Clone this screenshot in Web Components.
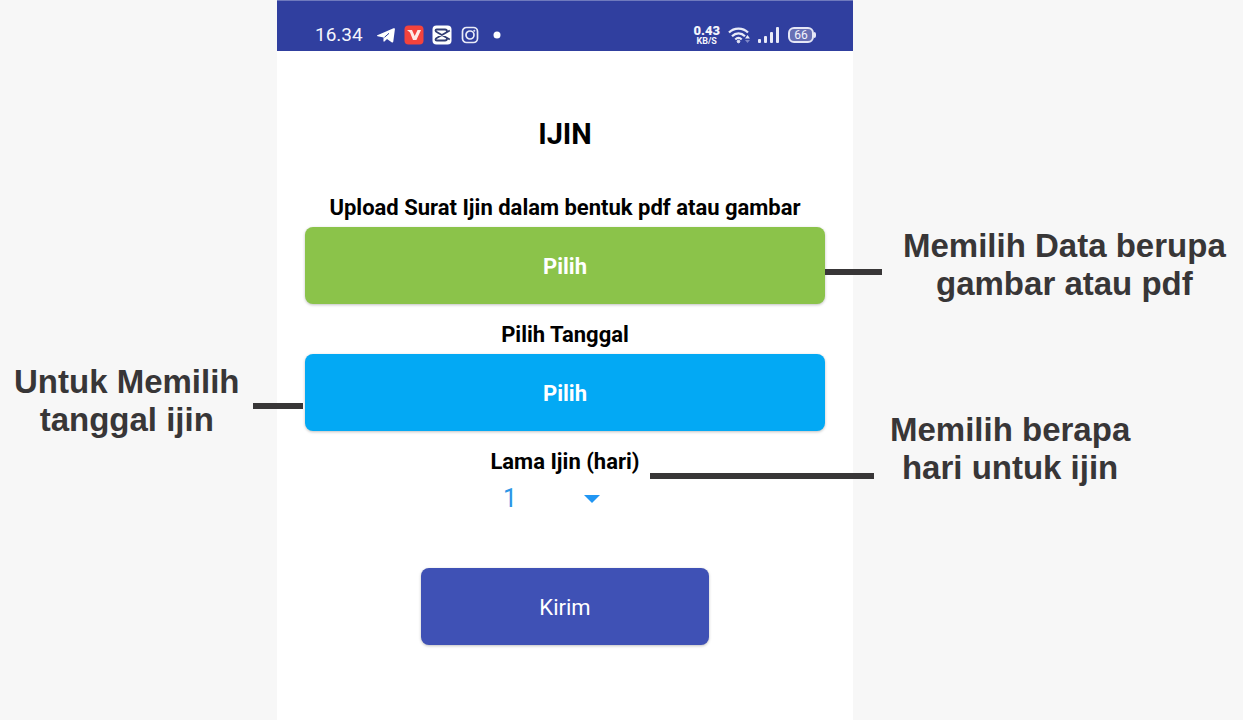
<!DOCTYPE html>
<html lang="id">
<head>
<meta charset="utf-8">
<meta name="viewport" content="width=device-width, initial-scale=1">
<title>IJIN</title>
<style>
  body { margin: 0; background: #f7f7f7; font-family: Roboto, sans-serif; }
</style>
</head>
<body>
<guide-page></guide-page>

<template id="guide-page">
  <style>
    :host { display: grid; grid-template-columns: 277fr 576fr 390fr; min-height: 100vh; }
    aside { display: flex; flex-direction: column; align-items: flex-start; gap: 108px; }
    .left { padding: 363px 0 0 14px; }
    .right { padding-top: 227px; }
    .date { --line: 50px; --gap: 13px; --pull: -26px; --drop: 10px; }
    .file { --line: 57px; --gap: 21px; --pull: -28px; --drop: 14px; }
    .days { --line: 224px; --gap: 16px; --pull: -203px; --drop: 54px; }
  </style>
  <aside class="left">
    <call-out class="date" side="left">Untuk Memilih<br>tanggal ijin</call-out>
  </aside>
  <phone-screen>
    <upload-field caption="Upload Surat Ijin dalam bentuk pdf atau gambar" tone="green">Pilih</upload-field>
    <upload-field caption="Pilih Tanggal" tone="blue">Pilih</upload-field>
    <day-picker></day-picker>
    <send-button>Kirim</send-button>
  </phone-screen>
  <aside class="right">
    <call-out class="file">Memilih Data berupa<br>gambar atau pdf</call-out>
    <call-out class="days">Memilih berapa<br>hari untuk ijin</call-out>
  </aside>
</template>

<template id="call-out">
  <style>
    :host { display: flex; align-items: center; gap: var(--gap); position: relative; z-index: 1; margin-left: var(--pull); }
    :host([side="left"]) { flex-direction: row-reverse; margin: 0 var(--pull) 0 0; }
    i { flex: none; width: var(--line); height: 6px; margin-top: var(--drop); background: #383637; }
    p { margin: 0; font: bold 33px/38px "Liberation Sans", Arial, sans-serif; color: #383637; text-align: center; white-space: nowrap; }
  </style>
  <i></i><p><slot></slot></p>
</template>

<template id="phone-screen">
  <style>
    :host { display: flex; flex-direction: column; background: #fff; }
    main { display: flex; flex-direction: column; gap: 16px; padding: 67px 28px 74px; }
    h1 { margin: 0 0 27px; font-size: 29px; line-height: 32px; font-weight: 700; text-align: center; color: #000; }
  </style>
  <status-bar></status-bar>
  <main><h1>IJIN</h1><slot></slot></main>
</template>

<template id="status-bar">
  <style>
    :host { display: flex; justify-content: space-between; align-items: center; height: 51px; box-sizing: border-box; padding: 18px 37px 0 38px; border-top: 1px solid #6f7abd; background: #303f9f; color: #f4f5fc; }
    div { display: flex; align-items: center; }
    svg { display: block; }
    time { font-size: 19px; line-height: 24px; margin-right: 13px; }
    .apps { gap: 8px; }
    .rate { display: flex; flex-direction: column; align-items: center; font-weight: 700; }
    .rate b { font-size: 13px; line-height: 11px; }
    .rate small { font-size: 9px; line-height: 10px; }
    .system { gap: 8px; }
    .battery { box-sizing: border-box; width: 26px; height: 16px; border: 2px solid #e4e6f6; border-radius: 6px; background: #6870b4; font-size: 12px; line-height: 12px; justify-content: center; }
    .cell i { width: 2px; height: 6px; background: #e4e6f6; border-radius: 0 2px 2px 0; }
  </style>
  <div>
    <time>16.34</time>
    <div class="apps">
      <svg width="20" height="20" viewBox="0 0 20 20"><path fill="#fff" d="M1.300 10.300 17.500 3.300c1-.4 1.500 0 1.400 1L17.300 16.500c-.2 1-.8 1.300-1.700.7L11 14l-2.300 2.300c-.6.6-1.300.4-1.300-.5l.2-3.300-6-1.300c-.7-.2-.8-.6-.3-.9z"/><path d="m8.500 12.300 4.500-4" stroke="#303f9f" stroke-width="1"/></svg>
      <svg width="20" height="20" viewBox="0 0 20 20"><rect x=".5" y=".5" width="19" height="19" rx="4" fill="#f4433c"/><path d="M3 5h5l2.700 6L13.500 5H17l-4.600 10H9L6 7.500z" fill="#ffe9e4"/></svg>
      <svg width="20" height="20" viewBox="0 0 20 20"><rect x=".5" y=".5" width="19" height="19" rx="4" fill="#fff"/><path d="M17.800 5.500 5.500 12.500c-1.500.8-2 1.200-2 2s.5 1 1.300 1H13c1.500 0 2-.5 2-2M17.800 14.500 5.500 7.500c-1.500-.8-2-1.200-2-2s.5-1 1.300-1H13c1.500 0 2 .5 2 2" fill="none" stroke="#303c72" stroke-width="1.800"/></svg>
      <svg width="20" height="20" viewBox="0 0 20 20" fill="none" stroke="#e9ebf8" stroke-width="1.700"><rect x="2.500" y="2.500" width="15" height="15" rx="4"/><circle cx="10" cy="10" r="4"/><circle cx="14.300" cy="5.800" r=".7" fill="#e9ebf8" stroke-width=".6"/></svg>
      <svg width="20" height="20" viewBox="0 0 20 20"><circle cx="9" cy="10" r="3.500" fill="#fff"/></svg>
    </div>
  </div>
  <div class="system">
    <div class="rate"><b>0.43</b><small>KB/S</small></div>
    <svg width="22" height="20" viewBox="0 0 22 20" fill="none" stroke="#e9ebf8" stroke-width="2.200"><path d="M1 7.500c5-5.300 14-5.300 19 0M4 11.200c3.700-3.800 9.300-3.800 13 0M7.300 14.500c2-2 4.300-2 6.400 0"/><circle cx="10.500" cy="16.500" r="1.300" fill="#e9ebf8" stroke-width="1"/><path d="m17 13.500 2.500-3.500 2.500 3.500z" fill="#e9ebf8" stroke="none"/><path d="m17 15 2.500 3 2.500-3z" fill="#7f88c8" stroke="none"/></svg>
    <svg width="22" height="20" viewBox="0 0 22 20" fill="#e9ebf8"><rect x="0" y="14" width="3" height="4" rx="1"/><rect x="6" y="11" width="3" height="7" rx="1"/><rect x="12" y="7" width="3" height="11" rx="1"/><rect x="18" y="2" width="3" height="16" rx="1"/></svg>
    <div class="cell"><div class="battery">66</div><i></i></div>
  </div>
</template>

<template id="upload-field">
  <style>
    :host { display: flex; flex-direction: column; gap: 6px; --fill: #8bc34a; }
    :host([tone="blue"]) { --fill: #03a9f4; }
    label { padding-top: 1px; font-size: 22px; line-height: 28px; font-weight: 700; text-align: center; color: #000; }
    button { height: 77px; margin-top: -1px; padding: 2px 16px 0; border: 0; border-radius: 8px; background: var(--fill); box-shadow: 0 1px 3px rgba(0,0,0,.25); color: #fff; font: 700 22px/28px Roboto, sans-serif; }
  </style>
  <label for="pick"></label>
  <button id="pick" type="button"><slot></slot></button>
</template>

<template id="day-picker">
  <style>
    :host { display: flex; flex-direction: column; align-items: center; gap: 5px; }
    label { padding-top: 1px; font-size: 22px; line-height: 28px; font-weight: 700; color: #000; }
    div { display: grid; width: 124px; align-items: center; }
    select, svg { grid-area: 1 / 1; }
    select { appearance: none; height: 36px; padding: 0; border: 0; background: none; color: #2d96e6; font: 25px/36px Roboto, sans-serif; }
    svg { justify-self: end; margin-right: 27px; pointer-events: none; }
  </style>
  <label for="days">Lama Ijin (hari)</label>
  <div>
    <select id="days"><option>1</option><option>2</option><option>3</option></select>
    <svg width="16" height="8" viewBox="0 0 16 8"><path d="M0 0h16L8 8z" fill="#2196f3"/></svg>
  </div>
</template>

<template id="send-button">
  <style>
    :host { display: flex; justify-content: center; margin-top: 35px; }
    button { width: 288px; height: 77px; padding: 2px 16px 0; border: 0; border-radius: 8px; background: #3f51b5; box-shadow: 0 1px 3px rgba(0,0,0,.25); color: #fff; font: 22px/28px Roboto, sans-serif; }
  </style>
  <button type="button"><slot></slot></button>
</template>

<script>
  class TemplateElement extends HTMLElement {
    constructor() {
      super();
      this.attachShadow({ mode: "open" })
        .append(document.getElementById(this.localName).content.cloneNode(true));
    }
  }
  customElements.define("call-out", class extends TemplateElement {});
  customElements.define("status-bar", class extends TemplateElement {});
  customElements.define("day-picker", class extends TemplateElement {});
  customElements.define("send-button", class extends TemplateElement {});
  customElements.define("upload-field", class extends TemplateElement {
    connectedCallback() {
      this.shadowRoot.querySelector("label").textContent = this.getAttribute("caption");
    }
  });
  customElements.define("phone-screen", class extends TemplateElement {});
  customElements.define("guide-page", class extends TemplateElement {});
</script>
</body>
</html>
